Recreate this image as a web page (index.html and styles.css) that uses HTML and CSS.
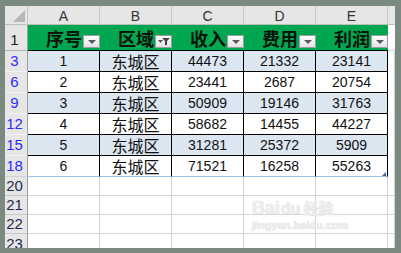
FILE: index.html
```html
<!DOCTYPE html>
<html lang="zh-CN">
<head>
<meta charset="utf-8">
<title>Sheet</title>
<link rel="stylesheet" href="styles.css">
</head>
<body>
<div class="sheet">
  <div class="row colhead">
    <div class="rh corner"><svg width="23" height="18" viewBox="0 0 23 18"><polygon points="20,4 20,16 8,16" fill="#b8b8b8"/></svg></div>
    <div class="c">A</div><div class="c">B</div><div class="c">C</div><div class="c">D</div><div class="c">E</div>
    <div class="fill"></div>
  </div>
  <div class="row head">
    <div class="rh">1</div>
    <div class="c">序号<span class="btn"><i class="tri"></i></span></div>
    <div class="c">区域<span class="btn"><svg width="15" height="11" viewBox="0 0 15 11"><polygon points="2,4 7,4 4.5,7" fill="#555"/><polygon points="6,2 14,2 11,5 11,9 9,9 9,5" fill="#444"/></svg></span></div>
    <div class="c">收入<span class="btn"><i class="tri"></i></span></div>
    <div class="c">费用<span class="btn"><i class="tri"></i></span></div>
    <div class="c">利润<span class="btn"><i class="tri"></i></span></div>
    <div class="fill"></div>
  </div>
  <div class="row data blue"><div class="rh f">3</div><div class="c">1</div><div class="c cn">东城区</div><div class="c">44473</div><div class="c">21332</div><div class="c">23141</div><div class="fill"></div></div>
  <div class="row data"><div class="rh f">6</div><div class="c">2</div><div class="c cn">东城区</div><div class="c">23441</div><div class="c">2687</div><div class="c">20754</div><div class="fill"></div></div>
  <div class="row data blue"><div class="rh f">9</div><div class="c">3</div><div class="c cn">东城区</div><div class="c">50909</div><div class="c">19146</div><div class="c">31763</div><div class="fill"></div></div>
  <div class="row data"><div class="rh f">12</div><div class="c">4</div><div class="c cn">东城区</div><div class="c">58682</div><div class="c">14455</div><div class="c">44227</div><div class="fill"></div></div>
  <div class="row data blue"><div class="rh f">15</div><div class="c">5</div><div class="c cn">东城区</div><div class="c">31281</div><div class="c">25372</div><div class="c">5909</div><div class="fill"></div></div>
  <div class="row data last"><div class="rh f">18</div><div class="c">6</div><div class="c cn">东城区</div><div class="c">71521</div><div class="c">16258</div><div class="c handle">55263</div><div class="fill"></div></div>
  <div class="row empty"><div class="rh">20</div><div class="c"></div><div class="c"></div><div class="c"></div><div class="c"></div><div class="c"></div><div class="fill"></div></div>
  <div class="row empty"><div class="rh">21</div><div class="c"></div><div class="c"></div><div class="c"></div><div class="c"></div><div class="c"></div><div class="fill"></div></div>
  <div class="row empty"><div class="rh">22</div><div class="c"></div><div class="c"></div><div class="c"></div><div class="c"></div><div class="c"></div><div class="fill"></div></div>
  <div class="row empty tail"><div class="rh">23</div><div class="c"></div><div class="c"></div><div class="c"></div><div class="c"></div><div class="c"></div><div class="fill"></div></div>
  <div class="wm">
    <div class="wm-top"><span class="wm-bai">Bai</span><span class="wm-du">du</span><span class="wm-jy">经验</span></div>
    <div class="wm-url">jingyan.baidu.com</div>
  </div>
</div>
</body>
</html>
```

FILE: styles.css
```css
html, body { margin: 0; padding: 0; }
body {
  background: #7a8a81;
  width: 401px;
  height: 253px;
  overflow: hidden;
  font-family: "Liberation Sans", Arial, "Noto Sans CJK SC", sans-serif;
}
.sheet {
  position: relative;
  margin: 6px 6px 0 5px;
  width: 390px;
  height: 242px;
  background: #fff;
  overflow: hidden;
}
.row { display: flex; }
.rh {
  box-sizing: border-box;
  width: 23px;
  flex: none;
  background: #e6e6e6;
  border-right: 1px solid #9e9e9e;
  border-bottom: 1px solid #f4f4f4;
  color: #1e2a50;
  font-size: 15px;
  line-height: 16px;
  display: flex;
  align-items: center;
  justify-content: center;
  padding-right: 4px;
  padding-left: 1px;
  overflow: hidden;
}
.c {
  box-sizing: border-box;
  width: 72px;
  flex: none;
  display: flex;
  align-items: center;
  justify-content: center;
  position: relative;
  line-height: 16px;
}
.fill { flex: 1; box-sizing: border-box; }

/* column header */
.colhead { height: 19px; }
.colhead .rh, .colhead .c, .colhead .fill {
  background: #e6e6e6;
  border-bottom: 1px solid #bdbdbd;
}
.colhead .rh { border-right: 1px solid #c8c8c8; padding: 0; }
.colhead .c {
  border-right: 1px solid #c8c8c8;
  color: #333;
  font-size: 14px;
  align-items: flex-end;
  line-height: 16px;
}
.corner { display: block; }
.corner svg { display: block; }

/* green header */
.head { height: 26px; }
.head .rh {
  border-bottom: 1px solid #b0b0b0;
  align-items: flex-end;
  padding-bottom: 2px;
  color: #222;
}
.head .c {
  background: #00a650;
  border-bottom: 1px solid #000;
  font-family: "Noto Sans CJK SC", sans-serif;
  font-weight: 700;
  font-size: 18px;
  color: #0a140a;
  align-items: flex-end;
  line-height: 20px;
  padding-bottom: 2px;
}
.head .fill { border-bottom: 1px solid #d4d4d4; }
.btn {
  position: absolute;
  right: 0;
  bottom: 2px;
  box-sizing: border-box;
  width: 17px;
  height: 13px;
  background: linear-gradient(#ffffff, #e4e4e4);
  border: 1px solid #9aa0a6;
  display: flex;
  align-items: center;
  justify-content: center;
}
.btn svg { display: block; }
.tri {
  width: 0;
  height: 0;
  border-left: 4px solid transparent;
  border-right: 4px solid transparent;
  border-top: 4px solid #5a5a5a;
  margin-top: 1px;
}

/* data rows */
.data { height: 21px; }
.data .c {
  border-right: 1px solid #000;
  border-bottom: 1px solid #000;
  font-size: 14px;
  color: #111;
}
.data .cn {
  font-family: "Noto Sans CJK SC", sans-serif;
  font-size: 16px;
  line-height: 16px;
}
.data.blue .c { background: #dce6f1; }
.data .rh { border-bottom: 1px solid #f2f2f2; }
.data.last .c { border-bottom: 1px solid #9ec3e8; }
.data.last .rh { border-bottom: 1px solid #d0d0d0; }
.data .fill { border-right: 1px solid #d4d4d4; }
.rh.f { color: #2b2bff; }
.handle::after {
  content: "";
  position: absolute;
  right: 1px;
  bottom: 0;
  width: 0;
  height: 0;
  border-left: 4px solid transparent;
  border-bottom: 4px solid #3a5ea8;
}

/* empty rows */
.empty { height: 19px; }
.empty .c {
  border-right: 1px solid #d4d4d4;
  border-bottom: 1px solid #d4d4d4;
}
.empty .fill { border-right: 1px solid #d4d4d4; border-bottom: 1px solid #d4d4d4; }
.empty .rh { border-bottom: 1px solid #c8c8c8; color: #1e2a50; }
.empty.tail .rh { align-items: flex-start; padding-top: 2px; }

/* watermark */
.wm {
  position: absolute;
  left: 247px;
  top: 192px;
  width: 110px;
  color: #eeeeee;
  text-shadow: 0 0 1px #c8c8c8;
}
.wm-top { display: flex; align-items: baseline; font-weight: 700; line-height: 20px; }
.wm-bai { font-size: 18px; font-family: "Liberation Sans", sans-serif; }
.wm-du { font-size: 16px; margin-left: 1px; }
.wm-jy { font-size: 15px; margin-left: 3px; font-family: "Noto Sans CJK SC", sans-serif; }
.wm-url { font-size: 11px; line-height: 13px; font-weight: 700; }
```
